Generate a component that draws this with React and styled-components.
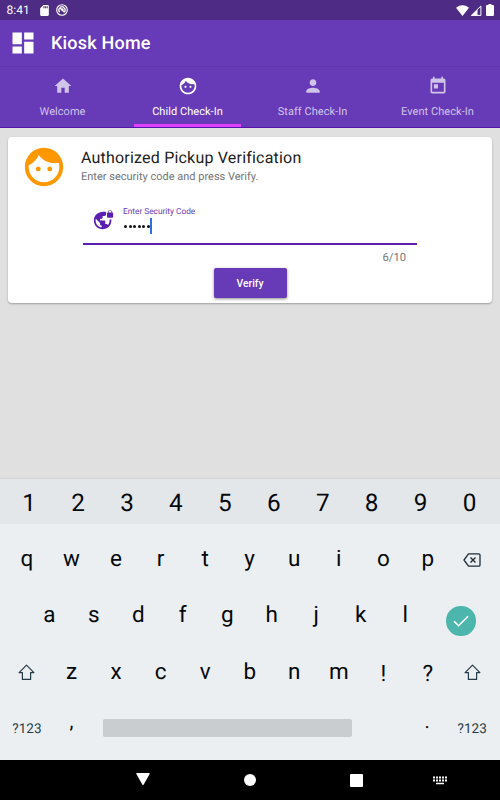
import React from 'react';
import styled, { createGlobalStyle } from 'styled-components';

const Global = createGlobalStyle`
  * { box-sizing: border-box; }
  body {
    margin: 0;
    background: #e0e0e0;
    font-family: Roboto, "Liberation Sans", sans-serif;
    text-rendering: geometricPrecision;
  }
`;

const Screen = styled.div`
  width: 500px;
  height: 800px;
  display: flex;
  flex-direction: column;
  overflow: hidden;
  background: #e0e0e0;
`;

const Icon = styled.svg`
  display: block;
  flex: none;
  width: ${p => p.$size}px;
  height: ${p => p.$h || p.$size}px;
  fill: currentColor;
`;

const StatusBar = styled.header`
  height: 20px;
  flex: none;
  display: flex;
  align-items: center;
  padding: 0 5px 0 6.5px;
  background: #4e2b85;
  color: #fff;
`;
const Clock = styled.span`
  width: 31px;
  font-size: 12px;
  line-height: 20px;
`;
const StatusGroup = styled.div`
  display: flex;
  align-items: center;
  gap: ${p => p.$gap}px;
  margin-left: ${p => (p.$end ? 'auto' : '0')};
`;

const Toolbar = styled.div`
  height: 47px;
  flex: none;
  display: flex;
  align-items: center;
  gap: 14px;
  padding: 0 9.5px 0 9px;
  background: #673ab7;
  border-bottom: 1px solid #6136ad;
  color: #fff;
`;
const AppTitle = styled.h1`
  margin: 1px 0 0;
  font-size: 18px;
  font-weight: 500;
  line-height: 24px;
  letter-spacing: 0.2px;
`;

const Tabs = styled.nav`
  height: 61px;
  flex: none;
  display: grid;
  grid-template-columns: repeat(4, 1fr);
  background: #673ab7;
  border-bottom: 1px solid #5413ac;
`;
const Tab = styled.div`
  display: flex;
  flex-direction: column;
  align-items: center;
  padding-top: 9px;
  color: ${p => (p.$active ? '#fff' : '#d1c4e9')};
`;
const TabLabel = styled.span`
  margin-top: 7px;
  font-size: 11px;
  line-height: 17px;
  letter-spacing: 0.05px;
`;
const Indicator = styled.div`
  width: 107px;
  height: 3px;
  margin-top: 4px;
  background: #e040fb;
`;

const Content = styled.main`
  flex: 1;
  padding: 9px 8px;
`;
const Card = styled.section`
  height: 166px;
  padding: 7px 13px 0;
  display: flex;
  flex-direction: column;
  border-radius: 4px;
  background: #fff;
  box-shadow: 0 1px 2px rgba(0, 0, 0, 0.3);
`;
const CardHeader = styled.div`
  display: flex;
  gap: 14px;
  height: 56px;
  color: #ff9800;
`;
const CardTitle = styled.h2`
  margin: 4px 0 0;
  font-size: 16px;
  font-weight: 400;
  line-height: 19px;
  color: #212121;
  letter-spacing: 0.2px;
`;
const CardText = styled.p`
  margin: 2.5px 0 0;
  font-size: 11px;
  line-height: 14px;
  color: #757575;
`;
const Field = styled.div`
  width: 334px;
  height: 45px;
  margin: 0 0 0 62px;
  display: flex;
  gap: 9px;
  padding: 8px 0 0 10px;
  border-bottom: 2px solid #5a1fb0;
  color: #5a1fb0;
`;
const LockIcon = styled.div`
  padding-top: 1px;
`;
const FieldLabel = styled.label`
  display: block;
  margin-top: -1.5px;
  font-size: 8.3px;
  line-height: 10px;
  color: #673ab7;
`;
const Password = styled.div`
  display: flex;
  align-items: center;
  height: 16px;
  margin: 1.5px 0 0 1px;
  gap: 1.6px;
`;
const Dot = styled.i`
  width: 3px;
  height: 3px;
  border-radius: 50%;
  background: #111;
`;
const Caret = styled.i`
  width: 2px;
  height: 16px;
  margin-left: -1.2px;
  background: #2f6fe0;
`;
const Counter = styled.div`
  width: 385px;
  height: 23px;
  padding-top: 6px;
  font-size: 11.2px;
  line-height: 14px;
  color: #757575;
  text-align: right;
`;
const Verify = styled.button`
  width: 73px;
  height: 30px;
  align-self: center;
  padding: 0;
  border: 0;
  border-radius: 2px;
  background: #673ab7;
  color: #fff;
  font: 500 10.3px Roboto, sans-serif;
  box-shadow: 0 1px 3px rgba(0, 0, 0, 0.45);
`;

const Keyboard = styled.section`
  height: 281px;
  flex: none;
  background: #eceff1;
  color: #05090c;
  box-shadow: 0 -1px 1px rgba(0, 0, 0, 0.05);
`;
const NumberRow = styled.div`
  height: 45px;
  display: grid;
  grid-template-columns: repeat(10, 1fr);
  padding: 0 6px 0 4.7px;
  background: #e3e7ea;
`;
const KeyRow = styled.div`
  height: 56.5px;
  display: grid;
  grid-template-columns: ${p => p.$cols || 'repeat(11, 1fr)'};
  padding: 0 5.3px 0 ${p => p.$start || 4.7}px;
`;
const Key = styled.div`
  display: flex;
  align-items: center;
  justify-content: center;
  padding-top: ${p => p.$drop || 0}px;
  padding-bottom: ${p => p.$lift || 0}px;
  font-size: ${p => p.$size || 22.5}px;
  line-height: 28px;
  color: ${p => p.$color || 'inherit'};
`;
const Space = styled.div`
  height: 18px;
  margin: 25.5px 0 0 9.5px;
  width: 249px;
  border-radius: 2px;
  background: #c9cdd0;
`;
const Enter = styled.div`
  width: 29.5px;
  height: 29.5px;
  display: grid;
  place-items: center;
  border-radius: 50%;
  background: #4db6ac;
  color: #fff;
`;
const NavBar = styled.footer`
  height: 40px;
  flex: none;
  display: grid;
  grid-template-columns: 90px 107px 106px 107px 60px;
  align-items: center;
  justify-items: center;
  background: #000;
  color: #fff;
`;

const paths = {
  dashboard: 'M3 13h8V3H3v10zm0 8h8v-6H3v6zm10 0h8V11h-8v10zm0-18v6h8V3h-8z',
  home: 'M10 20v-6h4v6h5v-8h3L12 3 2 12h3v8z',
  face: 'M9 11.75c-.69 0-1.25.56-1.25 1.25s.56 1.25 1.25 1.25 1.25-.56 1.25-1.25-.56-1.25-1.25-1.25zm6 0c-.69 0-1.25.56-1.25 1.25s.56 1.25 1.25 1.25 1.25-.56 1.25-1.25-.56-1.25-1.25-1.25zM12 2C6.48 2 2 6.48 2 12s4.48 10 10 10 10-4.48 10-10S17.52 2 12 2zm0 18c-4.41 0-8-3.59-8-8 0-.29.02-.58.05-.86 2.36-1.05 4.23-2.98 5.21-5.37C11.07 8.33 14.05 10 17.42 10c.78 0 1.53-.09 2.25-.26.21.71.33 1.47.33 2.26 0 4.41-3.59 8-8 8z',
  person: 'M12 12c2.21 0 4-1.79 4-4s-1.79-4-4-4-4 1.79-4 4 1.79 4 4 4zm0 2c-2.67 0-8 1.34-8 4v2h16v-2c0-2.66-5.33-4-8-4z',
  today: 'M19 3h-1V1h-2v2H8V1H6v2H5c-1.11 0-1.99.9-1.99 2L3 19c0 1.1.89 2 2 2h14c1.1 0 2-.9 2-2V5c0-1.1-.9-2-2-2zm0 16H5V8h14v11zM7 10h5v5H7z',
  vpnLock: 'M22 4v-.5C22 2.12 20.88 1 19.5 1S17 2.12 17 3.5V4c-.55 0-1 .45-1 1v4c0 .55.45 1 1 1h5c.55 0 1-.45 1-1V5c0-.55-.45-1-1-1zm-.8 0h-3.4v-.5c0-.94.76-1.7 1.7-1.7s1.7.76 1.7 1.7V4zm-2.28 8c.04.33.08.66.08 1 0 2.08-.8 3.97-2.1 5.39-.26-.81-1-1.39-1.9-1.39h-1v-3c0-.55-.45-1-1-1H8v-2h2c.55 0 1-.45 1-1V8h2c1.1 0 2-.9 2-2V3.46c-.95-.3-1.95-.46-3-.46C5.48 3 1 7.48 1 13s4.48 10 10 10 10-4.48 10-10c0-.34-.02-.67-.05-1h-2.03zM10 20.93c-3.95-.49-7-3.85-7-7.93 0-.62.08-1.21.21-1.79L8 16v1c0 1.1.9 2 2 2v1.93z',
  sd: 'M18 2h-8L4.02 8 4 20c0 1.1.9 2 2 2h12c1.1 0 2-.9 2-2V4c0-1.1-.9-2-2-2zm-6 6h-2V4h2v4zm3 0h-2V4h2v4zm3 0h-2V4h2v4z',
};

const Glyph = ({ name, size }) => (
  <Icon $size={size} viewBox="0 0 24 24"><path d={paths[name]} /></Icon>
);
const Shift = () => (
  <Icon $size={17} viewBox="0 0 17 17">
    <path d="M8.5 1.2L1.1 8.6H4.4V15.4H12.6V8.6H15.9Z" fill="none" stroke="#263b49" strokeWidth="1.2" strokeLinejoin="round" />
  </Icon>
);
const Backspace = () => (
  <Icon $size={18} $h={14} viewBox="0 0 18 14">
    <path d="M5.5 .8H15.7Q17 .8 17 2V12Q17 13.2 15.7 13.2H5.5L1 7Z" fill="none" stroke="#1c2d3a" strokeWidth="1.3" strokeLinejoin="round" />
    <path d="M7.5 4.5l5 5m0-5l-5 5" stroke="#1c2d3a" strokeWidth="1.4" />
  </Icon>
);

const tabs = [
  ['Welcome', 'home'],
  ['Child Check-In', 'face'],
  ['Staff Check-In', 'person'],
  ['Event Check-In', 'today'],
];

export default function App() {
  return (
    <Screen>
      <Global />
      <StatusBar>
        <Clock>8:41</Clock>
        <StatusGroup $gap={5.5}>
          <Glyph name="sd" size={13} />
          <Icon $size={12} viewBox="0 0 12 12">
            <circle cx="6" cy="6" r="5.3" fill="none" stroke="currentColor" strokeWidth="1.1" />
            <path d="M3.8 8.2A3.1 3.1 0 1 1 8.2 8.2M4 4l4.2 4.2" fill="none" stroke="currentColor" strokeWidth="1.2" />
            <circle cx="6.4" cy="5.6" r="1.3" />
          </Icon>
        </StatusGroup>
        <StatusGroup $gap={0.5} $end>
          <Icon $size={13} $h={11} viewBox="0 0 13 11"><path d="M0 2.7Q6.5-2 13 2.7L6.5 11Z" /></Icon>
          <Icon $size={12} $h={11} viewBox="0 0 12 11">
            <path d="M1.4 10.4L10.9 1V10.4Z" fill="none" stroke="currentColor" strokeWidth="1" />
            <path d="M1 10.8L7.5 4.4V10.8Z" />
          </Icon>
          <Icon $size={13} $h={12} viewBox="0 0 13 12"><path d="M5 1H6.5V0H9.5V1H11Q12 1 12 2V11Q12 12 11 12H5Q4 12 4 11V2Q4 1 5 1Z" /></Icon>
        </StatusGroup>
      </StatusBar>
      <Toolbar>
        <Glyph name="dashboard" size={28} />
        <AppTitle>Kiosk Home</AppTitle>
      </Toolbar>
      <Tabs>
        {tabs.map(([label, icon], i) => (
          <Tab key={label} $active={i === 1}>
            <Glyph name={icon} size={20} />
            <TabLabel>{label}</TabLabel>
            {i === 1 && <Indicator />}
          </Tab>
        ))}
      </Tabs>
      <Content>
        <Card>
          <CardHeader>
            <Glyph name="face" size={46} />
            <div>
              <CardTitle>Authorized Pickup Verification</CardTitle>
              <CardText>Enter security code and press Verify.</CardText>
            </div>
          </CardHeader>
          <Field>
            <LockIcon><Glyph name="vpnLock" size={21} /></LockIcon>
            <div>
              <FieldLabel>Enter Security Code</FieldLabel>
              <Password>
                {[0, 1, 2, 3, 4, 5].map(n => <Dot key={n} />)}
                <Caret />
              </Password>
            </div>
          </Field>
          <Counter>6/10</Counter>
          <Verify>Verify</Verify>
        </Card>
      </Content>
      <Keyboard>
        <NumberRow>
          {[...'1234567890'].map(k => <Key key={k} $size={24.3} $drop={3}>{k}</Key>)}
        </NumberRow>
        <KeyRow>
          {[...'qwertyuiop'].map(k => <Key key={k} $drop={13}>{k}</Key>)}
          <Key $drop={16}><Backspace /></Key>
        </KeyRow>
        <KeyRow $start={27} $cols="repeat(9, 44.5px) 1fr">
          {[...'asdfghjkl'].map(k => <Key key={k} $drop={12}>{k}</Key>)}
          <Key $drop={24}>
            <Enter>
              <Icon $size={18} viewBox="0 0 18 18"><path d="M2 9.2l4.6 4.5L16 4.2" fill="none" stroke="currentColor" strokeWidth="1.6" /></Icon>
            </Enter>
          </Key>
        </KeyRow>
        <KeyRow>
          <Key $drop={15}><Shift /></Key>
          {[...'zxcvbnm!?'].map(k => <Key key={k} $drop={k === '!' || k === '?' ? 17 : 13}>{k}</Key>)}
          <Key $drop={15}><Shift /></Key>
        </KeyRow>
        <KeyRow $cols="44.5px 44.5px 311px 45px 45px">
          <Key $size={13.5} $drop={14} $color="#263b49">?123</Key>
          <Key $lift={1} $size={20}>,</Key>
          <Space />
          <Key $lift={1} $size={20}>.</Key>
          <Key $size={13.5} $drop={14} $color="#263b49">?123</Key>
        </KeyRow>
      </Keyboard>
      <NavBar>
        <span />
        <Icon $size={15} $h={14} viewBox="0 0 15 14"><path d="M.8 0H13.2Q14 0 13.6 1L7.7 11.5Q7 12.5 6.3 11.5L.4 1Q0 0 .8 0Z" /></Icon>
        <Icon $size={12} viewBox="0 0 12 12"><circle cx="6" cy="6" r="6" /></Icon>
        <Icon $size={13} viewBox="0 0 13 13"><rect width="13" height="13" rx="1" /></Icon>
        <Icon $size={14} $h={9} viewBox="0 0 14 9">
          <path d="M0 1.5H14M0 4.5H14" stroke="currentColor" strokeWidth="2" strokeDasharray="2 1" />
          <path d="M3 7.5H11" stroke="currentColor" strokeWidth="1.5" />
        </Icon>
      </NavBar>
    </Screen>
  );
}
